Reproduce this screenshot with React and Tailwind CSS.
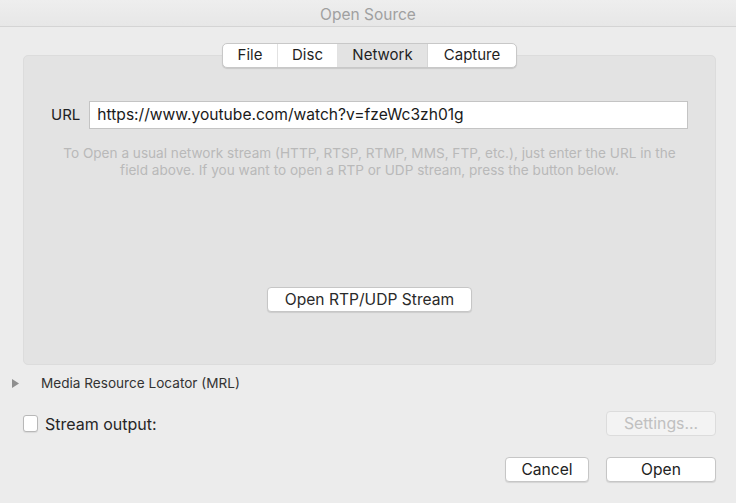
import React from "react";

export default function App() {
  const font = { fontFamily: 'Inter, "Liberation Sans", Arial, sans-serif' };
  return (
    <div className="w-[736px] h-[503px] bg-[#ececec] flex flex-col text-[#222]" style={font}>
      <div className="h-[27px] shrink-0 flex items-center justify-center pt-[3px] border-b border-[#d4d4d4] bg-gradient-to-b from-[#eeeeee] to-[#e7e7e7] text-[15.5px] text-[#a0a0a0]">
        Open Source
      </div>
      <div className="relative pl-[23px] pr-[20px] pt-[28px]">
        <div className="absolute left-[222px] top-[16px] z-10 flex h-[25px] rounded-[5px] border border-[#c8c8c8] bg-white shadow-[0_1px_1px_rgba(0,0,0,0.12)] text-[15px] text-[#1f1f1f] overflow-hidden">
          <div className="w-[55px] flex items-center justify-center border-r border-[#e2e2e2]">File</div>
          <div className="w-[60px] flex items-center justify-center border-r border-[#e2e2e2]">Disc</div>
          <div className="w-[90px] flex items-center justify-center bg-[#e3e3e3] border-r border-[#d6d6d6]">Network</div>
          <div className="w-[88px] flex items-center justify-center">Capture</div>
        </div>
        <div className="h-[310px] rounded-[5px] bg-[#e3e3e3] border border-[#dcdcdc] flex flex-col">
          <div className="flex items-center mt-[45px] pl-[27px] pr-[27px]">
            <span className="text-[15px] mr-[9px]">URL</span>
            <div className="flex-1 h-[28px] bg-white border border-[#c4c4c4] flex items-center pl-[7px] text-[15.6px] text-[#1a1a1a]">
              https://www.youtube.com/watch?v=fzeWc3zh01g
            </div>
          </div>
          <p className="mt-[16px] px-[10px] text-center text-[13.6px] leading-[17px] text-[#b9b9b9]">
            To Open a usual network stream (HTTP, RTSP, RTMP, MMS, FTP, etc.), just enter the URL in the<br />
            field above. If you want to open a RTP or UDP stream, press the button below.
          </p>
          <div className="flex justify-center mt-[108px]">
            <button className="w-[205px] h-[25px] bg-white rounded-[4px] border border-[#c6c6c6] shadow-[0_1px_1px_rgba(0,0,0,0.1)] text-[15.6px] text-[#2a2a2a]">
              Open RTP/UDP Stream
            </button>
          </div>
        </div>
      </div>
      <div className="flex items-center pl-[12px] mt-[11px] h-[14px]">
        <svg width="8" height="9" viewBox="0 0 8 9" className="mr-[21px]">
          <path d="M0 0 L7 4.5 L0 9 Z" fill="#8f8f8f" />
        </svg>
        <span className="text-[13.6px] text-[#333]">Media Resource Locator (MRL)</span>
      </div>
      <div className="flex items-center pl-[23px] pr-[20px] mt-[21px] h-[25px]">
        <div className="w-[15px] h-[17px] rounded-[3px] bg-white border border-[#b8b8b8] shadow-[0_1px_1px_rgba(0,0,0,0.08)] mr-[7px]" />
        <span className="text-[16px] text-[#262626] mt-[1px]">Stream output:</span>
        <div className="flex-1" />
        <button className="w-[110px] h-[25px] rounded-[4px] bg-[#f3f3f3] border border-[#dcdcdc] text-[15.8px] text-[#c0c0c0]">
          Settings...
        </button>
      </div>
      <div className="flex justify-end pr-[20px] mt-[21px] gap-[17px]">
        <button className="w-[84px] h-[25px] bg-white rounded-[4px] border border-[#c6c6c6] shadow-[0_1px_1px_rgba(0,0,0,0.1)] text-[15.6px] text-[#222]">
          Cancel
        </button>
        <button className="w-[110px] h-[25px] bg-white rounded-[4px] border border-[#c6c6c6] shadow-[0_1px_1px_rgba(0,0,0,0.1)] text-[15.6px] text-[#222]">
          Open
        </button>
      </div>
    </div>
  );
}
